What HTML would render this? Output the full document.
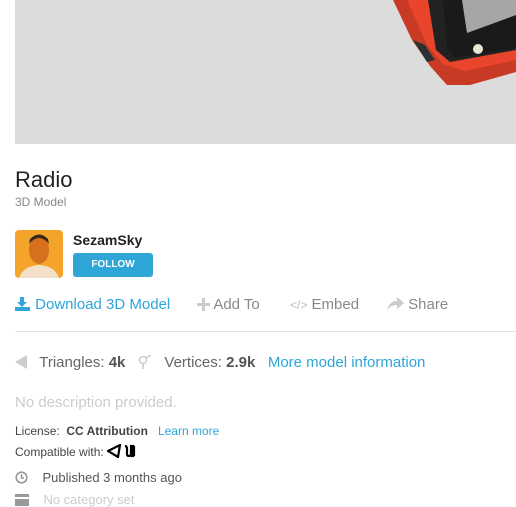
<!DOCTYPE html>
<html><head><meta charset="utf-8"><style>
body{margin:0;width:516px;height:501px;overflow:hidden;background:#fff;font-family:"Liberation Sans",sans-serif;position:relative}
.a{position:absolute;white-space:nowrap}
svg.i{vertical-align:-2px}
</style></head><body>
<div class="a" style="left:15px;top:0;width:501px;height:144px;background:#dcdcdc;overflow:hidden">
<svg width="501" height="144" style="position:absolute;left:0;top:0">
<polygon points="378,0 397,40 415,66 432,85 455,85 501,72 501,0" fill="#c93a24"/>
<polygon points="398,40 410,45 420,60 412,62" fill="#2c3232"/>
<polygon points="392,0 412,45 428,64 450,71 501,60 501,0" fill="#e8452c"/>
<polygon points="413,0 421,50 435,62 501,50 501,0" fill="#222"/>
<polygon points="428,0 432,48 440,58 501,48 501,0" fill="#1a1a1a"/>
<polygon points="447,0 452,33 501,15 501,0" fill="#a6a6a6"/>
<circle cx="463" cy="49" r="5" fill="#e6e6d2"/>
</svg></div>
<div class="a" style="left:15px;top:167px;font-size:22px;color:#222">Radio</div>
<div class="a" style="left:15px;top:195px;font-size:12px;color:#888">3D Model</div>
<div class="a" style="left:15px;top:230px;width:48px;height:48px;border-radius:4px;background:#f5a42b;overflow:hidden">
<svg width="48" height="48"><path d="M4 48 Q8 36 24 35 Q40 36 44 48Z" fill="#f3e0c8"/><ellipse cx="24" cy="20" rx="10" ry="14" fill="#d7701c"/><path d="M14 14 Q24 2 34 14 L33 9 Q24 0 15 9Z" fill="#3a2a1a"/></svg></div>
<div class="a" style="left:73px;top:232px;font-size:14px;font-weight:bold;color:#222">SezamSky</div>
<div class="a" style="left:73px;top:253px;width:80px;height:24px;background:#2ea6d8;border-radius:3px;color:#fff;font-size:10px;font-weight:bold;text-align:center;line-height:24px">FOLLOW</div>
<div class="a" style="left:15px;top:296px;font-size:15px;color:#2ea6d8"><svg class="i" width="16" height="14" viewBox="0 0 16 14"><path d="M5 0h4v5h3l-5 5-5-5h3z" fill="#2ea6d8"/><rect x="0" y="10" width="15" height="4" fill="#2ea6d8"/></svg> Download 3D Model</div>
<div class="a" style="left:197px;top:296px;font-size:15px;color:#888"><svg class="i" width="13" height="13"><path d="M5 0h3v5h5v3H8v5H5V8H0V5h5z" fill="#ccc"/></svg> Add To</div>
<div class="a" style="left:290px;top:296px;font-size:15px;color:#888"><span style="color:#bbb;font-size:12px">&lt;/&gt;</span> Embed</div>
<div class="a" style="left:387px;top:296px;font-size:15px;color:#888"><svg class="i" width="17" height="14"><path d="M10 0l7 6-7 6V8C5 8 2 10 0 14 1 8 4 4 10 4z" fill="#ccc"/></svg> Share</div>
<div class="a" style="left:15px;top:331px;width:501px;height:1px;background:#e3e3e3"></div>
<div class="a" style="left:15px;top:354px;font-size:15px;color:#666"><svg class="i" width="12" height="14"><path d="M12 0v14L0 7z" fill="#ccc"/></svg>&nbsp;&nbsp; Triangles: <b style="color:#555">4k</b> &nbsp;&nbsp;<svg class="i" width="14" height="14"><circle cx="5" cy="5" r="3.5" fill="none" stroke="#ccc" stroke-width="1.6"/><path d="M5 9v5M8 3l5-3" stroke="#ccc" stroke-width="1.6"/></svg>&nbsp;&nbsp; Vertices: <b style="color:#555">2.9k</b> &nbsp;&nbsp;<span style="color:#2ea6d8">More model information</span></div>
<div class="a" style="left:15px;top:394px;font-size:15px;color:#ccc">No description provided.</div>
<div class="a" style="left:15px;top:424px;font-size:12px;color:#444">License: &nbsp;<b>CC Attribution</b> &nbsp; <span style="color:#2ea6d8">Learn more</span></div>
<div class="a" style="left:15px;top:444px;font-size:12px;color:#444">Compatible with: <svg class="i" width="32" height="14"><path d="M1 7L13 1 11 13z" fill="none" stroke="#000" stroke-width="2.2"/><path d="M18 2q2 0 2 3v5q0 2 2 2t2-2V2h2v10h-2M27 2v10" stroke="#000" stroke-width="2.2" fill="none"/></svg></div>
<div class="a" style="left:15px;top:470px;font-size:13px;color:#555"><svg class="i" width="13" height="13"><circle cx="6.5" cy="6.5" r="5.3" fill="none" stroke="#999" stroke-width="1.6"/><path d="M6.5 3v4H9" stroke="#999" stroke-width="1.5" fill="none"/></svg>&nbsp;&nbsp;&nbsp; Published 3 months ago</div>
<div class="a" style="left:15px;top:492px;font-size:13px;color:#ccc"><svg class="i" width="14" height="12"><rect width="14" height="3" fill="#999"/><rect y="5" width="14" height="7" fill="#999"/></svg>&nbsp;&nbsp;&nbsp; No category set</div>
</body></html>
